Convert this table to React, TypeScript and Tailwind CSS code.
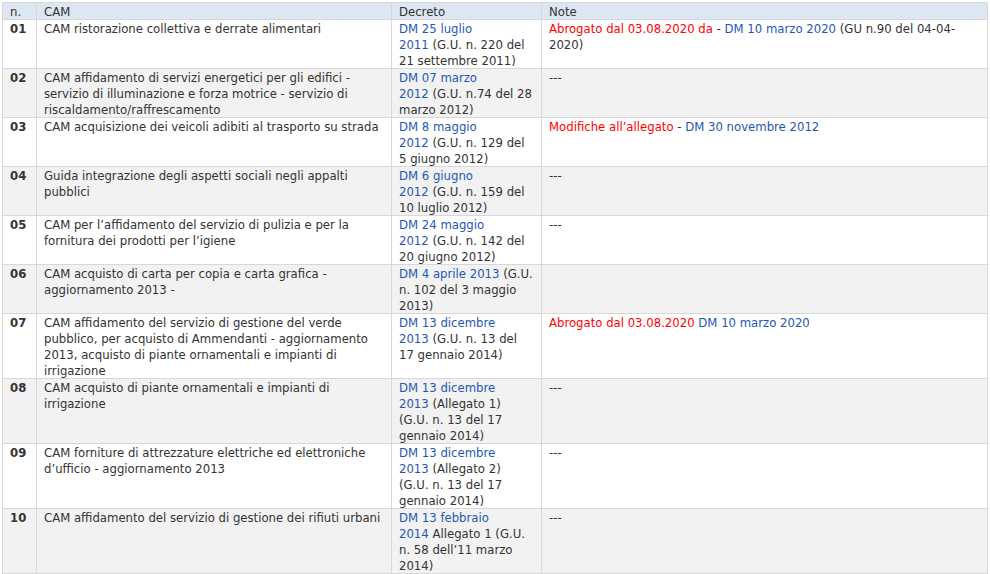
import React from "react";

const L = ({ children }: { children: React.ReactNode }) => (
  <a href="#" className="text-[#1f57b7]">
    {children}
  </a>
);
const R = ({ children }: { children: React.ReactNode }) => (
  <span className="text-[#ff0000]">{children}</span>
);

type Row = {
  n: string;
  cam: string[];
  dec: React.ReactNode[];
  note: React.ReactNode[];
};

const rows: Row[] = [
  {
    n: "01",
    cam: ["CAM ristorazione collettiva e derrate alimentari"],
    dec: [<L>DM 25 luglio</L>, <><L>2011</L> (G.U. n. 220 del</>, <>21 settembre 2011)</>],
    note: [
      <>
        <R>Abrogato dal 03.08.2020 da</R> - <L>DM 10 marzo 2020</L> (GU n.90 del 04-04-
      </>,
      <>2020)</>,
    ],
  },
  {
    n: "02",
    cam: [
      "CAM affidamento di servizi energetici per gli edifici -",
      "servizio di illuminazione e forza motrice - servizio di",
      "riscaldamento/raffrescamento",
    ],
    dec: [<L>DM 07 marzo</L>, <><L>2012</L> (G.U. n.74 del 28</>, <>marzo 2012)</>],
    note: [<>---</>],
  },
  {
    n: "03",
    cam: ["CAM acquisizione dei veicoli adibiti al trasporto su strada"],
    dec: [<L>DM 8 maggio</L>, <><L>2012</L> (G.U. n. 129 del</>, <>5 giugno 2012)</>],
    note: [
      <>
        <R>Modifiche all’allegato</R> - <L>DM 30 novembre 2012</L>
      </>,
    ],
  },
  {
    n: "04",
    cam: ["Guida integrazione degli aspetti sociali negli appalti", "pubblici"],
    dec: [<L>DM 6 giugno</L>, <><L>2012</L> (G.U. n. 159 del</>, <>10 luglio 2012)</>],
    note: [<>---</>],
  },
  {
    n: "05",
    cam: ["CAM per l’affidamento del servizio di pulizia e per la", "fornitura dei prodotti per l’igiene"],
    dec: [<L>DM 24 maggio</L>, <><L>2012</L> (G.U. n. 142 del</>, <>20 giugno 2012)</>],
    note: [<>---</>],
  },
  {
    n: "06",
    cam: ["CAM acquisto di carta per copia e carta grafica -", "aggiornamento 2013 -"],
    dec: [<><L>DM 4 aprile 2013</L> (G.U.</>, <>n. 102 del 3 maggio</>, <>2013)</>],
    note: [],
  },
  {
    n: "07",
    cam: [
      "CAM affidamento del servizio di gestione del verde",
      "pubblico, per acquisto di Ammendanti - aggiornamento",
      "2013, acquisto di piante ornamentali e impianti di",
      "irrigazione",
    ],
    dec: [<L>DM 13 dicembre</L>, <><L>2013</L> (G.U. n. 13 del</>, <>17 gennaio 2014)</>],
    note: [
      <>
        <R>Abrogato dal 03.08.2020</R> <L>DM 10 marzo 2020</L>
      </>,
    ],
  },
  {
    n: "08",
    cam: ["CAM acquisto di piante ornamentali e impianti di", "irrigazione"],
    dec: [<L>DM 13 dicembre</L>, <><L>2013</L> (Allegato 1)</>, <>(G.U. n. 13 del 17</>, <>gennaio 2014)</>],
    note: [<>---</>],
  },
  {
    n: "09",
    cam: ["CAM forniture di attrezzature elettriche ed elettroniche", "d’ufficio - aggiornamento 2013"],
    dec: [<L>DM 13 dicembre</L>, <><L>2013</L> (Allegato 2)</>, <>(G.U. n. 13 del 17</>, <>gennaio 2014)</>],
    note: [<>---</>],
  },
  {
    n: "10",
    cam: ["CAM affidamento del servizio di gestione dei rifiuti urbani"],
    dec: [<L>DM 13 febbraio</L>, <><L>2014</L> Allegato 1 (G.U.</>, <>n. 58 dell’11 marzo</>, <>2014)</>],
    note: [<>---</>],
  },
];

const cell = "border-r border-b border-[#d8d8d8] px-[7px] whitespace-nowrap overflow-hidden";

function Lines({ items }: { items: React.ReactNode[] }) {
  return (
    <div className="relative top-px">
      {items.map((it, i) => (
        <div key={i}>{it}</div>
      ))}
    </div>
  );
}

export default function App() {
  return (
    <div className="bg-white w-[990px] h-[574px] pt-[2px] pl-[2px] text-[#333333] text-[11.7px] leading-4 [font-family:'DejaVu_Sans',Verdana,sans-serif]">
      <div className="grid grid-cols-[34px_355px_150px_446px] w-[986px] border-l border-t border-[#d8d8d8]">
        <div className={`${cell} bg-[#dde6f3]`}>
          <Lines items={["n."]} />
        </div>
        <div className={`${cell} bg-[#dde6f3]`}>
          <Lines items={["CAM"]} />
        </div>
        <div className={`${cell} bg-[#dde6f3]`}>
          <Lines items={["Decreto"]} />
        </div>
        <div className={`${cell} bg-[#dde6f3]`}>
          <Lines items={["Note"]} />
        </div>
        {rows.map((r, i) => {
          const bg = i % 2 === 1 ? "bg-[#f2f2f2]" : "bg-white";
          return (
            <React.Fragment key={r.n}>
              <div className={`${cell} ${bg} font-bold`}>
                <Lines items={[r.n]} />
              </div>
              <div className={`${cell} ${bg}`}>
                <Lines items={r.cam} />
              </div>
              <div className={`${cell} ${bg}`}>
                <Lines items={r.dec} />
              </div>
              <div className={`${cell} ${bg}`}>
                <Lines items={r.note} />
              </div>
            </React.Fragment>
          );
        })}
      </div>
    </div>
  );
}
